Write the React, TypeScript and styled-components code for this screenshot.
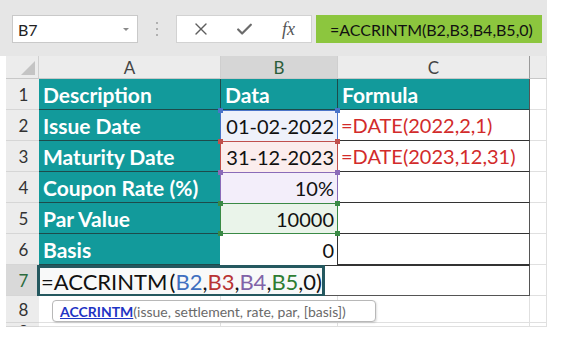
import React from "react";
import styled, { createGlobalStyle } from "styled-components";
import { X, Check } from "lucide-react";

const GlobalStyle = createGlobalStyle`
  body {
    margin: 0;
    background: #fff;
    font-family: Lato, "Liberation Sans", sans-serif;
  }
`;

const TEAL = "#129a9b";
const TEAL_LINE = "#1d4b4b";

const refColors = {
  blue: { line: "#4a74c9", bg: "#eef1fa", text: "#3f6fc0" },
  red: { line: "#c0504d", bg: "#fbeded", text: "#b83434" },
  purple: { line: "#8a6bb8", bg: "#f3eefa", text: "#8063a8" },
  green: { line: "#3a8a45", bg: "#eaf4ea", text: "#2e7d32" },
};

type RefName = keyof typeof refColors;

const Page = styled.div`
  width: 547px;
  display: flex;
  flex-direction: column;
`;

const FormulaBar = styled.div`
  height: 56px;
  box-sizing: border-box;
  padding: 15px 5px 0 12px;
  background: #e6e6e6;
  display: flex;
  align-items: flex-start;
`;

const NameBox = styled.div`
  width: 126px;
  height: 28px;
  box-sizing: border-box;
  background: #fff;
  border: 1px solid #c9c9c9;
  display: flex;
  align-items: center;
  justify-content: space-between;
  padding: 0 8px 0 5px;
  font-size: 16px;
  color: #222;
`;

const DropArrow = styled.span`
  width: 0;
  height: 0;
  border-left: 3px solid transparent;
  border-right: 3px solid transparent;
  border-top: 3px solid #8a8a8a;
`;

const Dots = styled.div`
  width: 38px;
  height: 28px;
  display: flex;
  flex-direction: column;
  align-items: center;
  justify-content: center;
  gap: 4px;
  span {
    width: 2px;
    height: 2px;
    background: #b0b0b0;
  }
`;

const FxBox = styled.div`
  width: 136px;
  height: 28px;
  box-sizing: border-box;
  background: #fff;
  border: 1px solid #d2d2d2;
  display: flex;
  align-items: center;
  padding-left: 14px;
  gap: 24px;
  color: #5e5e5e;
`;

const FxLabel = styled.span`
  font-family: "Liberation Serif", serif;
  font-style: italic;
  font-size: 18px;
  color: #555;
  margin-left: 4px;
`;

const FormulaInput = styled.div`
  width: 226px;
  height: 28px;
  margin-left: 4px;
  background: #8cc63e;
  display: flex;
  align-items: center;
  padding-left: 14px;
  box-sizing: border-box;
  font-size: 16px;
  color: #111;
`;

const Sheet = styled.div`
  position: relative;
  margin-left: 6px;
  display: grid;
  grid-template-columns: 33px 182px 117px 192px 17px;
  grid-template-rows: 23px repeat(7, 31px) 27px 4px;
  overflow: hidden;
`;

const Corner = styled.div`
  background: #ececec;
  border-right: 1px solid #d0d0d0;
  border-bottom: 1px solid #c8c8c8;
  position: relative;
  &::after {
    content: "";
    position: absolute;
    right: 3px;
    bottom: 3px;
    border-left: 14px solid transparent;
    border-bottom: 14px solid #c4c4c4;
  }
`;

const ColHeader = styled.div<{ $active?: boolean; $edge?: boolean }>`
  background: ${(p) => (p.$active ? "#d6d6d6" : "#ececec")};
  color: ${(p) => (p.$active ? "#2b5d3a" : "#444")};
  border-right: 1px solid ${(p) => (p.$edge ? "#9a9a9a" : "#cfcfcf")};
  border-bottom: 1px solid #c8c8c8;
  font-size: 17px;
  display: flex;
  align-items: center;
  justify-content: center;
  box-sizing: border-box;
`;

const RowHeader = styled.div<{ $active?: boolean; $cut?: boolean }>`
  background: ${(p) => (p.$active ? "#d9d9d9" : "#ececec")};
  color: ${(p) => (p.$active ? "#2b6b3e" : "#333")};
  border-bottom: 1px solid #d6d6d6;
  font-size: 17px;
  line-height: 1;
  display: flex;
  align-items: ${(p) => (p.$cut ? "flex-start" : "center")};
  justify-content: center;
  box-sizing: border-box;
  padding-left: 2px;
  overflow: hidden;
`;

const HeadCell = styled.div<{ $edge?: boolean }>`
  background: ${TEAL};
  color: #fff;
  font-weight: 700;
  font-size: 21px;
  border-right: 1px solid ${(p) => (p.$edge ? "#555" : TEAL_LINE)};
  border-bottom: 1px solid ${TEAL_LINE};
  display: flex;
  align-items: center;
  padding-left: 4px;
  box-sizing: border-box;
  white-space: nowrap;
`;

const ValueCell = styled.div<{ $ref?: RefName; $last?: boolean }>`
  position: relative;
  background: ${(p) => (p.$ref ? refColors[p.$ref].bg : "#fff")};
  border: 1px solid ${(p) => (p.$ref ? refColors[p.$ref].line : "#333")};
  border-bottom: ${(p) =>
    p.$ref && p.$last ? `1px solid ${refColors[p.$ref].line}` : "none"};
  border-top: ${(p) => (p.$ref ? `1px solid ${refColors[p.$ref].line}` : "none")};
  border-left: ${(p) => (p.$ref ? `1px solid ${refColors[p.$ref].line}` : "none")};
  margin-left: -1px;
  font-size: 20px;
  color: #111;
  display: flex;
  align-items: center;
  justify-content: flex-end;
  padding-right: 3px;
  box-sizing: border-box;
`;

const Handle = styled.span<{ $ref: RefName; $x: "left" | "right"; $y: "top" | "bottom" }>`
  position: absolute;
  width: 5px;
  height: 5px;
  background: ${(p) => refColors[p.$ref].line};
  ${(p) => p.$x}: -3px;
  ${(p) => p.$y}: -3px;
  z-index: 2;
`;

const NoteCell = styled.div`
  background: #fff;
  color: #d22b2b;
  font-size: 20px;
  border-right: 1px solid #555;
  border-bottom: 1px solid #333;
  display: flex;
  align-items: center;
  padding-left: 3px;
  box-sizing: border-box;
  white-space: nowrap;
`;

const GridCell = styled.div<{ $head?: boolean }>`
  background: ${(p) => (p.$head ? "#ececec" : "#fff")};
  border-right: 1px solid #e0e0e0;
  border-bottom: 1px solid ${(p) => (p.$head ? "#c8c8c8" : "#e0e0e0")};
  box-sizing: border-box;
`;

const EditRow = styled.div`
  grid-column: 2 / 5;
  background: #fff;
  border-top: 1px solid #333;
  border-right: 1px solid #555;
  border-bottom: 1px solid #555;
  box-sizing: border-box;
  display: flex;
`;

const Editor = styled.div`
  width: 288px;
  margin: -1px 0 -2px -2px;
  border: 3px solid #24585f;
  background: #f8f9f9;
  font-size: 22px;
  color: #111;
  display: flex;
  align-items: center;
  padding-left: 1px;
  box-sizing: border-box;
  white-space: nowrap;
`;

const Caret = styled.span`
  display: inline-block;
  width: 1px;
  height: 25px;
  background: #111;
  margin: 0 1px;
`;

const RefText = styled.span<{ $ref: RefName }>`
  color: ${(p) => refColors[p.$ref].text};
`;

const Tooltip = styled.div`
  position: absolute;
  left: 46px;
  top: 244px;
  width: 324px;
  height: 22px;
  box-sizing: border-box;
  background: #fff;
  border: 1px solid #b8b8b8;
  border-radius: 4px;
  box-shadow: 1px 1px 2px rgba(0, 0, 0, 0.12);
  display: flex;
  align-items: center;
  padding-left: 7px;
  font-size: 14px;
  color: #6a6a6a;
  white-space: nowrap;
  z-index: 3;
`;

const TipName = styled.span`
  color: #1f35c4;
  font-weight: 700;
  text-decoration: underline;
`;

const rows: { n: number; label: string; value: string; ref?: RefName; formula?: string }[] = [
  { n: 2, label: "Issue Date", value: "01-02-2022", ref: "blue", formula: "=DATE(2022,2,1)" },
  { n: 3, label: "Maturity Date", value: "31-12-2023", ref: "red", formula: "=DATE(2023,12,31)" },
  { n: 4, label: "Coupon Rate (%)", value: "10%", ref: "purple" },
  { n: 5, label: "Par Value", value: "10000", ref: "green" },
  { n: 6, label: "Basis", value: "0" },
];

const args: [string, RefName][] = [
  ["B2", "blue"],
  ["B3", "red"],
  ["B4", "purple"],
  ["B5", "green"],
];

export default function App() {
  return (
    <Page>
      <GlobalStyle />
      <FormulaBar>
        <NameBox>
          B7
          <DropArrow />
        </NameBox>
        <Dots>
          <span />
          <span />
          <span />
        </Dots>
        <FxBox>
          <X size={20} strokeWidth={1.6} />
          <Check size={19} strokeWidth={2.8} color="#6b6b6b" />
          <FxLabel>fx</FxLabel>
        </FxBox>
        <FormulaInput>=ACCRINTM(B2,B3,B4,B5,0)</FormulaInput>
      </FormulaBar>

      <Sheet>
        <Corner />
        <ColHeader>A</ColHeader>
        <ColHeader $active>B</ColHeader>
        <ColHeader $edge>C</ColHeader>
        <GridCell $head />

        <RowHeader>1</RowHeader>
        <HeadCell>Description</HeadCell>
        <HeadCell>Data</HeadCell>
        <HeadCell $edge>Formula</HeadCell>
        <GridCell />

        {rows.map((r, i) => (
          <React.Fragment key={r.n}>
            <RowHeader>{r.n}</RowHeader>
            <HeadCell>{r.label}</HeadCell>
            <ValueCell $ref={r.ref} $last={r.ref === "green"}>
              {r.ref && (
                <>
                  <Handle $ref={r.ref} $x="left" $y="top" />
                  <Handle $ref={r.ref} $x="right" $y="top" />
                  {i === 3 && (
                    <>
                      <Handle $ref={r.ref} $x="left" $y="bottom" />
                      <Handle $ref={r.ref} $x="right" $y="bottom" />
                    </>
                  )}
                </>
              )}
              {r.value}
            </ValueCell>
            <NoteCell>{r.formula}</NoteCell>
            <GridCell />
          </React.Fragment>
        ))}

        <RowHeader $active>7</RowHeader>
        <EditRow>
          <Editor>
            =ACCRINTM
            <Caret />(
            {args.map(([a, c]) => (
              <React.Fragment key={a}>
                <RefText $ref={c}>{a}</RefText>,
              </React.Fragment>
            ))}
            0)
          </Editor>
        </EditRow>
        <GridCell />

        <RowHeader>8</RowHeader>
        <GridCell />
        <GridCell />
        <GridCell />
        <GridCell />

        <RowHeader $cut>9</RowHeader>
        <GridCell />
        <GridCell />
        <GridCell />
        <GridCell />

        <Tooltip>
          <TipName>ACCRINTM</TipName>(issue, settlement, rate, par, [basis])
        </Tooltip>
      </Sheet>
    </Page>
  );
}
